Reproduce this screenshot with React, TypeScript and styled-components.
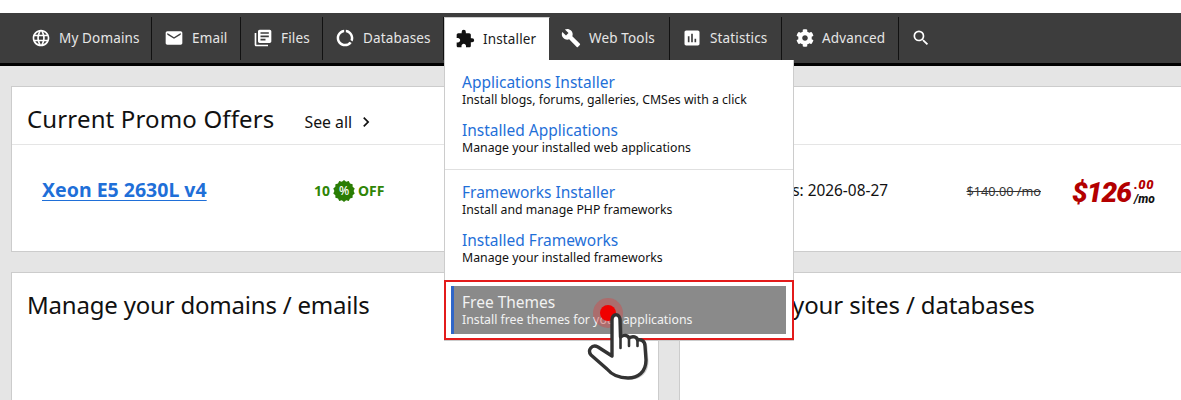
import React from "react";
import styled, { createGlobalStyle } from "styled-components";
import { MdLanguage, MdEmail, MdLibraryBooks, MdDataUsage, MdExtension, MdBuild, MdAssessment, MdSearch, MdChevronRight } from "react-icons/md";
import { FaCog } from "react-icons/fa";

const Global = createGlobalStyle`
  html, body { margin: 0; padding: 0; height: 400px; overflow: hidden; background: #fff; }
  * { box-sizing: border-box; }
  body { font-family: "Noto Sans", "Open Sans", sans-serif; color: #111; }
`;

const Page = styled.div`
  position: relative;
  width: 1181px;
  height: 400px;
  overflow: hidden;
  padding-top: 13px;
`;

const NavBar = styled.nav`
  display: flex;
  height: 53px;
  padding: 4px 0 6px 20px;
  background: #3d3d3d;
  border-bottom: 3px solid #000;
`;

const NavItem = styled.a<{ $w: number; $pl?: number; $active?: boolean; $last?: boolean }>`
  display: flex;
  align-items: center;
  flex: none;
  gap: 8px;
  width: ${(p) => p.$w}px;
  height: 43px;
  padding-left: ${(p) => p.$pl ?? 12}px;
  padding-bottom: 1px;
  font-size: 13.5px;
  letter-spacing: 0.15px;
  white-space: nowrap;
  color: ${(p) => (p.$active ? "#1a1a1a" : "#e6e6e6")};
  background: ${(p) => (p.$active ? "#fff" : "transparent")};
  border-right: 1px solid ${(p) => (p.$active ? "#3d3d3d" : p.$last ? "transparent" : "#111")};
  ${(p) => p.$active && "border-left: 1px solid #ccc; border-top: 1px solid #ccc;"}
  svg { flex: none; color: ${(p) => (p.$active ? "#111" : "#fff")}; }
`;

const Content = styled.main`
  background: #e5e5e5;
  height: 334px;
  padding: 20px 0 0 11px;
`;

const Card = styled.section`
  background: #fff;
  border: 1px solid #ccc;
`;

const PromoCard = styled(Card)`
  width: 1190px;
  height: 166px;
`;

const PromoHead = styled.div`
  display: flex;
  align-items: baseline;
  height: 58px;
  padding: 15px 0 0 15px;
  border-bottom: 1px solid #e5e5e5;
`;

const Title = styled.h2<{ $track?: number }>`
  margin: 0;
  font-size: 24px;
  font-weight: 400;
  line-height: 34px;
  letter-spacing: ${(p) => p.$track ?? 0}px;
  color: #111;
  white-space: nowrap;
`;

const SeeAll = styled.a`
  display: flex;
  align-items: center;
  margin-left: 30px;
  font-size: 15.8px;
  color: #111;
  svg { margin-left: 4px; }
`;

const PromoRow = styled.div`
  display: flex;
  align-items: center;
  height: 91px;
  padding-left: 30px;
`;

const Product = styled.a`
  flex: none;
  width: 272px;
  font-size: 19.5px;
  font-weight: 700;
  color: #1f6fd8;
  text-decoration: underline;
  text-underline-offset: 3px;
  white-space: nowrap;
  margin-top: -3px;
`;

const Discount = styled.div`
  display: flex;
  align-items: center;
  flex: none;
  width: 259px;
  font-size: 14px;
  font-weight: 700;
  color: #2f8506;
`;

const Badge = styled.span`
  position: relative;
  display: inline-flex;
  align-items: center;
  justify-content: center;
  width: 22px;
  height: 22px;
  margin: 0 3px;
  font-size: 12px;
  color: #fff;
  svg { position: absolute; inset: 0; }
  b { position: relative; font-weight: 500; }
`;

const Expires = styled.div`
  flex: none;
  width: 315px;
  text-align: right;
  font-size: 15.4px;
  color: #111;
  white-space: nowrap;
`;

const OldPrice = styled.div`
  flex: none;
  width: 153px;
  text-align: right;
  font-size: 12.7px;
  color: #333;
  text-decoration: line-through;
  white-space: nowrap;
`;

const Price = styled.div`
  display: flex;
  align-items: flex-start;
  flex: none;
  margin-left: 31px;
  padding-top: 4px;
  font-family: Roboto, "Liberation Sans", sans-serif;
  font-style: italic;
  font-weight: 900;
  color: #b30000;
`;

const Dollars = styled.span`
  font-size: 28px;
  line-height: 32px;
  letter-spacing: -1px;
`;

const Cents = styled.div`
  display: flex;
  flex-direction: column;
  margin-left: 3px;
  font-size: 13px;
  line-height: 12px;
  span { color: #b30000; margin-top: 2px; letter-spacing: 0.6px; }
  i { color: #111; font-size: 12px; line-height: 11px; margin-top: 3px; font-weight: 800; }
`;

const Row = styled.div`
  display: flex;
  gap: 20px;
  margin-top: 20px;
`;

const PanelCard = styled(Card)`
  width: 648px;
  height: 200px;
  padding: 15px 15px;
  flex: none;
`;

const Menu = styled.div`
  position: absolute;
  top: 60px;
  left: 444px;
  width: 350px;
  height: 281px;
  background: #fff;
  border: 1px solid #ccc;
  border-top: none;
  padding-top: 12px;
`;

const MenuLink = styled.a`
  display: block;
  height: 48px;
  padding: 1px 0 0 17px;
`;

const LinkTitle = styled.div`
  font-size: 15.5px;
  line-height: 18px;
  color: #1f6fd8;
  white-space: nowrap;
`;

const LinkSub = styled.div`
  font-size: 12.3px;
  line-height: 17px;
  color: #111;
  white-space: nowrap;
`;

const Divider = styled.div`
  height: 1px;
  margin: 1px 0 12px;
  background: #e0e0e0;
`;

const Highlight = styled.a`
  position: absolute;
  left: -1px;
  top: 220px;
  width: 350px;
  height: 60px;
  border: 2px solid #e31b1b;
  padding: 4px 6px 4px 5px;
`;

const HighlightInner = styled.div`
  height: 100%;
  background: #8a8a8a;
  border-left: 3px solid #2f66c8;
  padding: 7px 0 0 8px;
  ${LinkTitle} { color: #f2f2f2; }
  ${LinkSub} { color: #f2f2f2; }
`;

const Cursor = styled.svg`
  position: absolute;
  left: 581px;
  top: 293px;
`;

const HAND = "M612 320 C612 313 620 313 620 320 L620.5 337 C624 334.5 628 335 629 338 C633 335.5 637 337 637.5 340 C641 339 645 341 645 346 L646 360 C646 372 638 378 628 378 C618 378 612 375 607 369 L591 355 C587 350 592 344 598 347 L612 356 Z";

const Hand = () => (
  <Cursor width="72" height="90" viewBox="581 293 72 90">
    <circle cx="608" cy="313" r="15" fill="#d24a4a" opacity="0.45" />
    <circle cx="608" cy="313" r="8" fill="#f00000" />
    <path d={HAND} fill="#000" opacity="0.2" transform="translate(2.5 1.5)" />
    <path d={HAND} fill="#fff" stroke="#333" strokeWidth="3.4" strokeLinejoin="round" />
    <path d="M620.5 337 L620.5 348 M629 338 L629 346 M637.5 340 L637.5 346" stroke="#333" strokeWidth="2.6" fill="none" strokeLinecap="round" />
  </Cursor>
);

const items = [
  { label: "My Domains", w: 132, pl: 11, icon: <MdLanguage size={20} /> },
  { label: "Email", w: 89, icon: <MdEmail size={20} /> },
  { label: "Files", w: 82, icon: <MdLibraryBooks size={20} /> },
  { label: "Databases", w: 121, icon: <MdDataUsage size={20} /> },
];
const items2 = [
  { label: "Web Tools", w: 120, pl: 11, icon: <MdBuild size={20} /> },
  { label: "Statistics", w: 112, icon: <MdAssessment size={20} /> },
  { label: "Advanced", w: 117, pl: 14, icon: <FaCog size={18} /> },
];

const links = [
  ["Applications Installer", "Install blogs, forums, galleries, CMSes with a click"],
  ["Installed Applications", "Manage your installed web applications"],
];
const links2 = [
  ["Frameworks Installer", "Install and manage PHP frameworks"],
  ["Installed Frameworks", "Manage your installed frameworks"],
];

const burst = (() => {
  const pts: string[] = [];
  for (let i = 0; i < 28; i++) {
    const r = i % 2 ? 11 : 9.6;
    const a = (i / 28) * Math.PI * 2;
    pts.push(`${(11 + r * Math.cos(a)).toFixed(2)},${(11 + r * Math.sin(a)).toFixed(2)}`);
  }
  return pts.join(" ");
})();

export default function App() {
  return (
    <Page>
      <Global />
      <NavBar>
        {items.map((i) => (
          <NavItem key={i.label} $w={i.w} $pl={i.pl}>{i.icon}{i.label}</NavItem>
        ))}
        <NavItem $w={106} $pl={10} $active><MdExtension size={20} />Installer</NavItem>
        {items2.map((i) => (
          <NavItem key={i.label} $w={i.w} $pl={i.pl}>{i.icon}{i.label}</NavItem>
        ))}
        <NavItem $w={40} $pl={12} $last><MdSearch size={20} /></NavItem>
      </NavBar>
      <Content>
        <PromoCard>
          <PromoHead>
            <Title $track={0.15}>Current Promo Offers</Title>
            <SeeAll>See all <MdChevronRight size={20} /></SeeAll>
          </PromoHead>
          <PromoRow>
            <Product>Xeon E5 2630L v4</Product>
            <Discount>
              10
              <Badge>
                <svg width="22" height="22" viewBox="0 0 22 22"><polygon points={burst} fill="#2a7d04" /></svg>
                <b>%</b>
              </Badge>
              OFF
            </Discount>
            <Expires>Expires: 2026-08-27</Expires>
            <OldPrice>$140.00 /mo</OldPrice>
            <Price>
              <Dollars>$126</Dollars>
              <Cents><span>.00</span><i>/mo</i></Cents>
            </Price>
          </PromoRow>
        </PromoCard>
        <Row>
          <PanelCard><Title $track={-0.2}>Manage your domains / emails</Title></PanelCard>
          <PanelCard><Title $track={-0.14}>Manage your sites / databases</Title></PanelCard>
        </Row>
      </Content>
      <Menu>
        {links.map(([t, s]) => (
          <MenuLink key={t}><LinkTitle>{t}</LinkTitle><LinkSub>{s}</LinkSub></MenuLink>
        ))}
        <Divider />
        {links2.map(([t, s]) => (
          <MenuLink key={t}><LinkTitle>{t}</LinkTitle><LinkSub>{s}</LinkSub></MenuLink>
        ))}
        <Highlight>
          <HighlightInner>
            <LinkTitle>Free Themes</LinkTitle>
            <LinkSub>Install free themes for your applications</LinkSub>
          </HighlightInner>
        </Highlight>
      </Menu>
      <Hand />
    </Page>
  );
}
